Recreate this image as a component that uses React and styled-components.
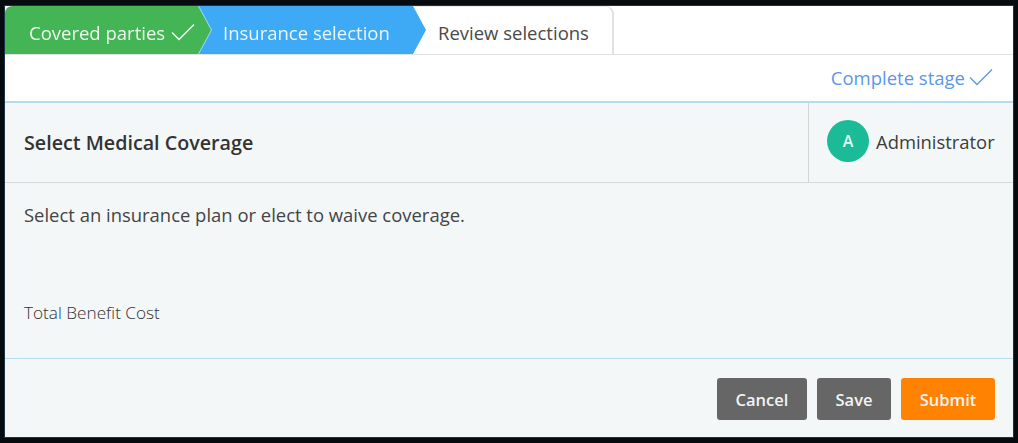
import React from "react";
import styled, { createGlobalStyle } from "styled-components";

const Global = createGlobalStyle`
  html, body { margin: 0; padding: 0; background: #060b10; }
  body { font-family: "Open Sans", "Liberation Sans", sans-serif; }
  #root { width: 1018px; height: 443px; overflow: hidden; }
`;
const Frame = styled.div`
  box-sizing: border-box;
  width: 1018px;
  height: 443px;
  padding: 6px 5px 6px 5px;
  background: #060b10;
`;
const Panel = styled.div`
  display: flex;
  flex-direction: column;
  height: 100%;
  background: #f4f7f8;
  box-shadow: 0 0 0 1px #1c3247;
  color: #3c3c3c;
`;
const StageBar = styled.div`
  display: flex;
  height: 49px;
  flex: none;
  box-sizing: border-box;
  background: #fff;
  border-bottom: 1px solid #e2e2e2;
`;
const StageEdge = styled.div`
  flex: none;
  margin-left: ${p => p.$overlap || 0}px;
  z-index: ${p => p.$z};
  filter: drop-shadow(1px 0 0 rgba(255, 255, 255, 0.55));
`;
const Stage = styled.div`
  box-sizing: border-box;
  height: 48px;
  display: flex;
  align-items: center;
  padding-top: 4px;
  font-size: 18.5px;
  color: ${p => p.$color};
  background: ${p => p.$bg};
  width: ${p => p.$width}px;
  padding-left: ${p => p.$pad}px;
  clip-path: ${p => p.$clip};
  gap: 6px;
`;
const LastStage = styled.div`
  box-sizing: border-box;
  flex: none;
  height: 48px;
  width: 200px;
  margin-left: -12px;
  padding: 3px 0 0 24px;
  display: flex;
  align-items: center;
  font-size: 18.5px;
  color: #4a4a4a;
  background: #fff;
  border-top: 1px solid #ececec;
  border-right: 2px solid #e2e2e2;
  border-radius: 0 8px 0 0;
`;
const ActionBar = styled.div`
  display: flex;
  justify-content: flex-end;
  align-items: center;
  height: 48px;
  flex: none;
  padding: 0 20px 2px 0;
  box-sizing: border-box;
  background: #fff;
  border-bottom: 2px solid #b4dcec;
  gap: 4px;
  color: #5b96ea;
  font-size: 18.5px;
`;
const Header = styled.div`
  display: flex;
  height: 79px;
  flex: none;
  border-bottom: 1px solid #d6d9db;
`;
const Title = styled.h1`
  flex: 1;
  margin: 0;
  padding: 0 0 0 19px;
  display: flex;
  align-items: center;
  font-size: 19.7px;
  font-weight: 600;
  color: #333;
`;
const User = styled.div`
  box-sizing: border-box;
  width: 205px;
  flex: none;
  display: flex;
  align-items: center;
  padding: 0 0 4px 18px;
  gap: 7px;
  border-left: 1px solid #d2d5d7;
  font-size: 18.4px;
  color: #3c3c3c;
`;
const UserName = styled.span`
  padding-top: 2px;
`;
const Avatar = styled.div`
  width: 42px;
  height: 42px;
  border-radius: 50%;
  background: #1cbb98;
  color: #e6f7f2;
  display: flex;
  align-items: center;
  justify-content: center;
  font-size: 16px;
  font-weight: 600;
`;
const Body = styled.div`
  flex: 1;
  display: flex;
  flex-direction: column;
  justify-content: space-between;
  padding: 20px 19px 35px;
  border-bottom: 1px solid #b4dcec;
`;
const Intro = styled.p`
  margin: 0;
  font-size: 18.45px;
  line-height: 24px;
  color: #444;
`;
const Label = styled.span`
  font-size: 17.2px;
  font-weight: 300;
  line-height: 20px;
  color: #333;
`;
const Footer = styled.div`
  display: flex;
  justify-content: flex-end;
  gap: 10px;
  flex: none;
  height: 78px;
  box-sizing: border-box;
  padding: 19px 18px 0 0;
`;
const Button = styled.button`
  height: 42px;
  width: ${p => p.$width}px;
  border: none;
  border-radius: 3px;
  background: ${p => p.$bg};
  color: #f3f3f3;
  font-family: inherit;
  font-size: 16.5px;
  font-weight: 600;
  padding: 0;
`;
const Check = ({ color, sw = 1.5 }) => (
  <svg width="24" height="18" viewBox="0 0 24 18" fill="none">
    <path d="M1 9.5 L8 16.5 L23 1.5" stroke={color} strokeWidth={sw} />
  </svg>
);

const greenClip = `path("M8 0 L193 0 L206 24 L193 48 L0 48 L0 8 Q0 0 8 0 Z")`;
const blueClip = "polygon(0 0, 215px 0, 228px 24px, 215px 48px, 0 48px)";

export default function App() {
  return (
    <Frame>
      <Global />
      <Panel>
        <StageBar>
          <StageEdge $z={3}>
            <Stage $bg="#43b555" $color="#eef8ef" $width={206} $pad={24} $clip={greenClip}>
              Covered parties <Check color="#f2faf3" />
            </Stage>
          </StageEdge>
          <StageEdge $z={2} $overlap={-13}>
            <Stage $bg="#3ea9f5" $color="#eaf6fe" $width={228} $pad={25} $clip={blueClip}>
              Insurance selection
            </Stage>
          </StageEdge>
          <LastStage>Review selections</LastStage>
        </StageBar>
        <ActionBar>
          Complete stage <Check color="#5b96ea" sw={1.3} />
        </ActionBar>
        <Header>
          <Title>Select Medical Coverage</Title>
          <User>
            <Avatar>A</Avatar>
            <UserName>Administrator</UserName>
          </User>
        </Header>
        <Body>
          <Intro>Select an insurance plan or elect to waive coverage.</Intro>
          <Label>Total Benefit Cost</Label>
        </Body>
        <Footer>
          <Button $bg="#666" $width={90}>Cancel</Button>
          <Button $bg="#666" $width={74}>Save</Button>
          <Button $bg="#ff8300" $width={94}>Submit</Button>
        </Footer>
      </Panel>
    </Frame>
  );
}
